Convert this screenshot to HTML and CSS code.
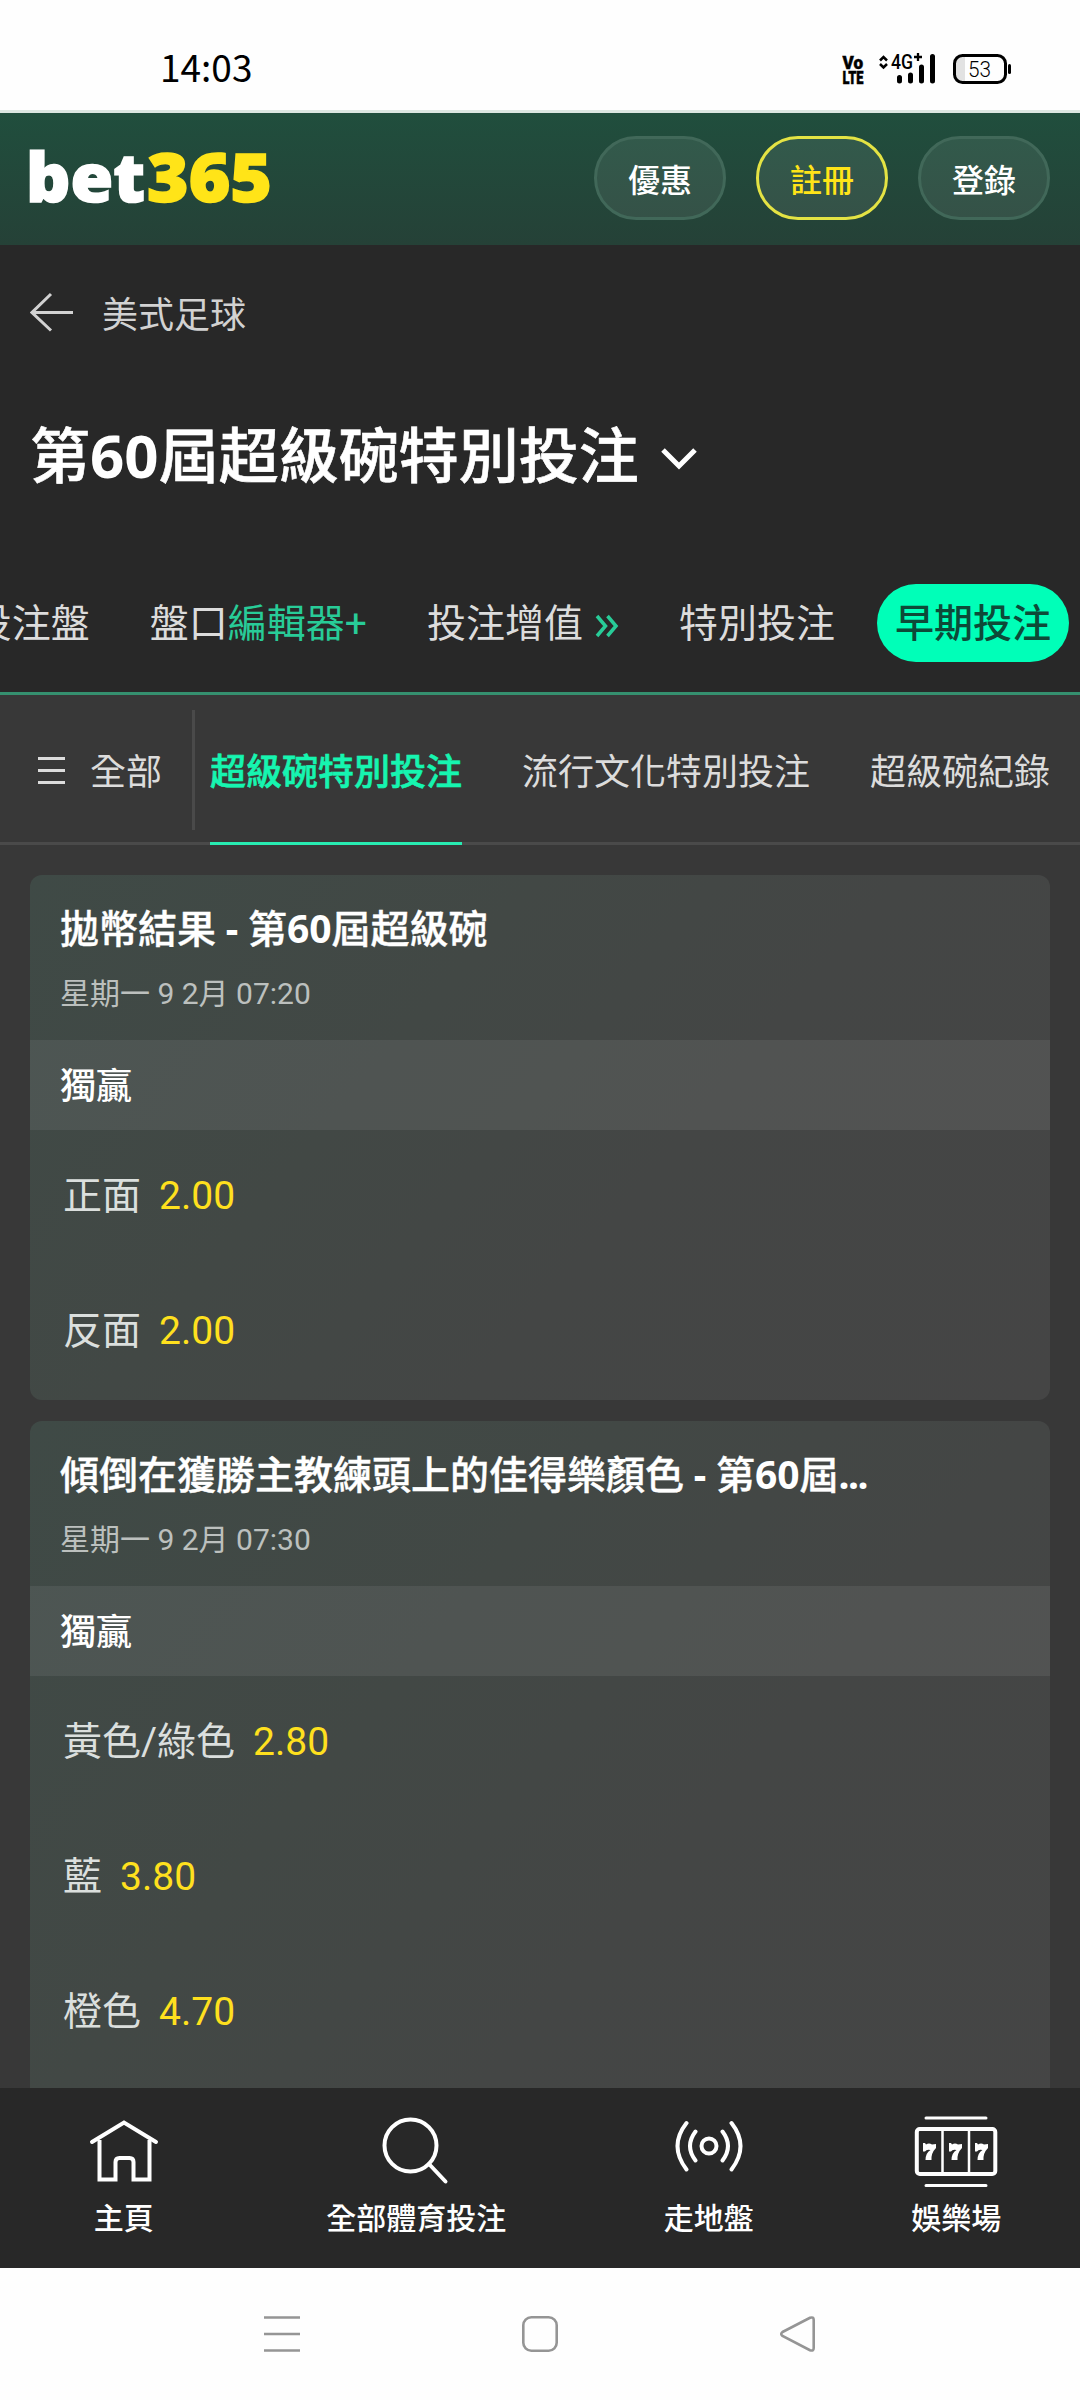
FILE: index.html
```html
<!DOCTYPE html>
<html lang="zh-Hant">
<head>
<meta charset="utf-8">
<title>bet365</title>
<link rel="stylesheet" href="styles.css">
</head>
<body>
<div class="screen">
  <div class="status">
    <span class="clock">14:03</span>
    <svg class="status-icons" width="172" height="46" viewBox="842 46 172 46">
      <text class="volte" x="842.500" y="68.500" textLength="20.500" lengthAdjust="spacingAndGlyphs">Vo</text>
      <text class="volte" x="842.500" y="84" textLength="21" lengthAdjust="spacingAndGlyphs">LTE</text>
      <path class="updown" d="M880 60.500l3.500-3.500 3.500 3.500M880 64l3.500 3.500 3.500-3.500"/>
      <text class="net" x="891" y="69" textLength="22" lengthAdjust="spacingAndGlyphs">4G</text>
      <path class="plus" d="M914 57h8M918 53v8"/>
      <path class="bars" d="M899.500 77.500v3.500M910.500 75v6M921.500 67v14M932.500 56.500v24.500"/>
      <path d="M955 63q0-7 7-7h3v26h-3q-7 0-7-7z" fill="#e2e2e2"/>
      <rect class="cell" x="954.500" y="55.500" width="51" height="27" rx="8"/>
      <path class="nub" d="M1009.500 65.500v7"/>
      <text class="pct" x="968" y="76.500" textLength="23" lengthAdjust="spacingAndGlyphs">53</text>
    </svg>
  </div>

  <header class="top">
    <svg class="logo" width="250" height="96" viewBox="0 0 250 96">
      <text class="logo-bet" x="0" y="71.500" textLength="119" lengthAdjust="spacingAndGlyphs">bet</text>
      <text class="logo-num" x="121" y="71.500" textLength="125" lengthAdjust="spacingAndGlyphs">365</text>
    </svg>
    <div class="actions">
      <a class="btn">優惠</a>
      <a class="btn btn-join">註冊</a>
      <a class="btn">登錄</a>
    </div>
  </header>

  <section class="heading">
    <div class="crumb">
      <svg width="43" height="40" viewBox="0 0 43 40"><path d="M21 2L2 20.500l19 18M2 20.500h41"/></svg>
      <span>美式足球</span>
    </div>
    <div class="title">
      <h1>第<span class="num">60</span>屆超級碗特別投注</h1>
      <svg width="36" height="24" viewBox="0 0 36 24"><path d="M2 3l16 16L34 3"/></svg>
    </div>
    <nav class="tabs">
      <a class="tab">投注盤</a>
      <a class="tab">盤口<span class="accent">編輯器+</span></a>
      <a class="tab">投注增值<svg width="36" height="24" viewBox="0 0 36 24"><path d="M14 2l8.500 10-8.500 10M24.500 2L33 12l-8.500 10"/></svg></a>
      <a class="tab">特別投注</a>
      <a class="tab tab-on">早期投注</a>
    </nav>
  </section>

  <nav class="sub">
    <a class="sub-all">
      <svg width="27" height="28" viewBox="0 0 27 28"><path d="M0 2.500h27M0 14.500h27M0 26.500h27"/></svg>
      <span>全部</span>
    </a>
    <a class="sub-item sub-on">超級碗特別投注</a>
    <a class="sub-item">流行文化特別投注</a>
    <a class="sub-item">超級碗紀錄</a>
  </nav>

  <main class="list">
    <article class="card">
      <div class="card-head"><h2>拋幣結果 <span class="num">-</span> 第<span class="num">60</span>屆超級碗</h2><p>星期一 9 2月 07:20</p></div>
      <div class="market">獨贏</div>
      <div class="row"><span>正面</span><b>2.00</b></div>
      <div class="row"><span>反面</span><b>2.00</b></div>
    </article>
    <article class="card">
      <div class="card-head"><h2>傾倒在獲勝主教練頭上的佳得樂顏色 <span class="num">-</span> 第<span class="num">60</span>屆<span class="num dots">...</span></h2><p>星期一 9 2月 07:30</p></div>
      <div class="market">獨贏</div>
      <div class="row"><span>黃色/綠色</span><b>2.80</b></div>
      <div class="row"><span>藍</span><b>3.80</b></div>
      <div class="row"><span>橙色</span><b>4.70</b></div>
      <div class="row"></div>
    </article>
  </main>

  <nav class="bottom">
    <a class="nav-item">
      <svg width="84" height="76" viewBox="0 0 84 76"><path d="M10 30L42 10.500 74 30" stroke-linecap="round"/><path d="M17.500 28V67.500H33.500V50q0-4 4-4h10q4 0 4 4V67.500H67.500V28"/></svg>
      <span>主頁</span>
    </a>
    <a class="nav-item">
      <svg width="84" height="76" viewBox="0 0 84 76"><circle cx="36.500" cy="33.500" r="26"/><path d="M55 52L71.500 69.500" stroke-linecap="round"/></svg>
      <span>全部體育投注</span>
    </a>
    <a class="nav-item">
      <svg width="84" height="76" viewBox="0 0 84 76" stroke-linecap="round"><circle cx="42" cy="34" r="7.500"/><path d="M28.500 19.500q-11 14.500 0 29M55.500 19.500q11 14.500 0 29M19.500 11q-18 23 0 46.500M64.500 11q18 23 0 46.500"/></svg>
      <span>走地盤</span>
    </a>
    <a class="nav-item">
      <svg width="84" height="76" viewBox="0 0 84 76"><rect x="2.800" y="17" width="78.500" height="45" rx="3"/><path d="M28.500 17v45M55 17v45" stroke-width="2.500"/><path d="M12 6h60M12 73.500h60" stroke-width="3" stroke-linecap="round"/><g class="sevens"><path d="M9 31h2l1 1.500q3-2 6 0l4-.500v4q-5 5-4.500 12h-6q0-7 5-10-4-1-5.500 1.500H9z"/><path d="M35 31h2l1 1.500q3-2 6 0l4-.500v4q-5 5-4.500 12h-6q0-7 5-10-4-1-5.500 1.500H35z"/><path d="M61 31h2l1 1.500q3-2 6 0l4-.500v4q-5 5-4.500 12h-6q0-7 5-10-4-1-5.500 1.500H61z"/></g></svg>
      <span>娛樂場</span>
    </a>
  </nav>

  <div class="system">
    <svg width="36" height="36" viewBox="0 0 36 36"><path d="M0 1.500h36M0 18h36M0 34.500h36"/></svg>
    <svg width="36" height="36" viewBox="0 0 36 36"><rect x="1.300" y="1.300" width="33.400" height="33.400" rx="8"/></svg>
    <svg width="36" height="36" viewBox="0 0 36 36"><path d="M2.500 16L30 1.800Q33.700 .500 33.700 4V32Q33.700 35.500 30 34.200L2.500 20Q0 18 2.500 16z"/></svg>
  </div>
</div>
</body>
</html>
```
FILE: styles.css
```css
* { box-sizing: border-box; margin: 0; padding: 0; }

body {
  width: 1080px;
  height: 2400px;
  overflow: hidden;
  background: #383838;
  color: #fff;
  font-family: Roboto, "Noto Sans CJK TC", sans-serif;
}

svg { display: block; fill: none; flex: none; }

.screen { display: flex; flex-direction: column; height: 2400px; }

/* Status bar */
.status {
  height: 113px;
  flex: none;
  display: flex;
  justify-content: space-between;
  align-items: flex-start;
  padding: 0 66px 0 160px;
  background: #fefefe;
  border-bottom: 3px solid #dbe6e1;
  color: #000;
}
.clock { font: 400 37px/46px "Noto Sans CJK TC", sans-serif; margin-top: 43px; }
.status-icons { margin-top: 46px; fill: #000; }
.volte { font: 900 18.5px Roboto, sans-serif; stroke: #000; stroke-width: .5; }
.net { font: 500 20.5px Roboto, sans-serif; }
.pct { font: 300 22px Roboto, sans-serif; }
.updown { fill: none; stroke: #000; stroke-width: 2.5; }
.plus { stroke: #000; stroke-width: 2.3; }
.bars { stroke: #000; stroke-width: 5; stroke-linecap: round; }
.cell { fill: none; stroke: #000; stroke-width: 3; }
.nub { stroke: #000; stroke-width: 3; stroke-linecap: round; }

/* Brand header */
.top {
  height: 132px;
  flex: none;
  display: flex;
  justify-content: space-between;
  align-items: center;
  padding: 0 30px 2px 26px;
  background: linear-gradient(#204e3d, #254137);
}
.logo { font: 800 67px "Open Sans", sans-serif; stroke-width: 1.6; }
.logo-bet { fill: #fff; stroke: #fff; }
.logo-num { fill: #ffe418; stroke: #ffe418; }
.actions { display: flex; gap: 30px; }
.btn {
  width: 132px;
  height: 84px;
  display: flex;
  justify-content: center;
  align-items: center;
  border: 3px solid #416859;
  border-radius: 42px;
  background: rgba(255, 255, 255, .08);
  font-size: 32px;
  font-weight: 500;
}
.btn-join { border-color: #e4e344; color: #ffe418; }

/* Page heading */
.heading {
  height: 450px;
  flex: none;
  display: flex;
  flex-direction: column;
  background: #282828;
  border-bottom: 3px solid #35906f;
}
.crumb {
  display: flex;
  align-items: center;
  gap: 29px;
  height: 60px;
  margin-top: 37px;
  padding-left: 30px;
  color: #d2d2d2;
  font-size: 36px;
}
.crumb svg { stroke: #d2d2d2; stroke-width: 3; }
.title { display: flex; align-items: center; gap: 22px; height: 90px; margin-top: 71px; padding-left: 30px; }
.title h1 { font-size: 60px; font-weight: 500; line-height: 90px; white-space: nowrap; -webkit-text-stroke: .6px #fff; }
.title svg { stroke: #fff; stroke-width: 5; margin-top: 1px; }
.num { font-family: "Noto Sans", sans-serif; font-weight: 700; line-height: 1; -webkit-text-stroke: 0; }
.tabs {
  display: flex;
  justify-content: flex-end;
  gap: 24px;
  margin-top: 81px;
  padding-right: 11px;
  overflow: hidden;
}
.tab {
  display: flex;
  align-items: center;
  height: 78px;
  flex: none;
  padding: 0 18px 7px;
  border-radius: 39px;
  color: #dcdcdc;
  font-size: 39px;
  white-space: nowrap;
}
.accent { color: #28cc98; }
.tab svg { stroke: #28cc98; stroke-width: 3.5; margin-top: 12px; }
.tab-on { background: #00ffb8; color: #0d4a38; font-weight: 500; }

/* Secondary tabs */
.sub {
  height: 150px;
  flex: none;
  display: flex;
  align-items: stretch;
  border-bottom: 3px solid #4a4a4a;
  color: #dcdcdc;
  font-size: 36px;
  white-space: nowrap;
}
.sub-all {
  display: flex;
  align-items: center;
  gap: 25px;
  width: 195px;
  flex: none;
  height: 120px;
  margin: 15px 15px 0 0;
  padding: 0 0 2px 38px;
  border-right: 3px solid #4a4a4a;
}
.sub-all svg { stroke: #dcdcdc; stroke-width: 3; margin-top: 2px; }
.sub-item { display: flex; align-items: center; height: 150px; margin-right: 60px; flex: none; padding-bottom: 2px; }
.sub-on { padding: 1px 0 0; color: #16f5b0; font-weight: 500; -webkit-text-stroke: .6px #16f5b0; border-bottom: 3px solid #28ecb2; }
.sub-item:last-child { margin-right: 0; }

/* Market cards */
.list { flex: 1; min-height: 0; overflow: hidden; display: flex; flex-direction: column; gap: 21px; padding: 30px 30px 0; }
.card {
  flex: none;
  border-radius: 12px;
  overflow: hidden;
  background: linear-gradient(130deg, #3f4a46 0%, #424845 35%, #444645 60%, #454545 100%);
}
.card-head { height: 165px; padding: 30px 30px 0; }
.card-head h2 { font-size: 39px; line-height: 50px; height: 50px; font-weight: 500; white-space: nowrap; -webkit-text-stroke: .4px #fff; }
.dots { letter-spacing: -1.5px; }
.card-head p { margin-top: 19px; font-size: 30px; line-height: 40px; color: #bcc0be; }
.market {
  height: 90px;
  padding: 0 30px 5px;
  display: flex;
  align-items: center;
  background: rgba(255, 255, 255, .07);
  font-size: 36px;
  font-weight: 500;
}
.row { display: flex; align-items: center; gap: 18px; height: 135px; padding: 0 33px 3px; font-size: 39px; color: #dbdfdd; }
.row span { padding-bottom: 8px; }
.row b { color: #ffe01e; font-weight: 400; }

/* App navigation */
.bottom { height: 180px; flex: none; display: flex; justify-content: space-around; background: #282828; }
.nav-item {
  display: flex;
  flex-direction: column;
  align-items: center;
  min-width: 90px;
  padding-top: 24px;
  font-size: 30px;
  line-height: 40px;
  font-weight: 500;
}
.nav-item svg { stroke: #fff; stroke-width: 4; margin-bottom: 11px; }
.nav-item .sevens { fill: #fff; stroke: none; }

/* System navigation */
.system {
  height: 132px;
  flex: none;
  display: flex;
  justify-content: center;
  gap: 222px;
  padding-top: 48px;
  background: #fefefe;
}
.system svg { stroke: #959595; stroke-width: 2.6; }
```
